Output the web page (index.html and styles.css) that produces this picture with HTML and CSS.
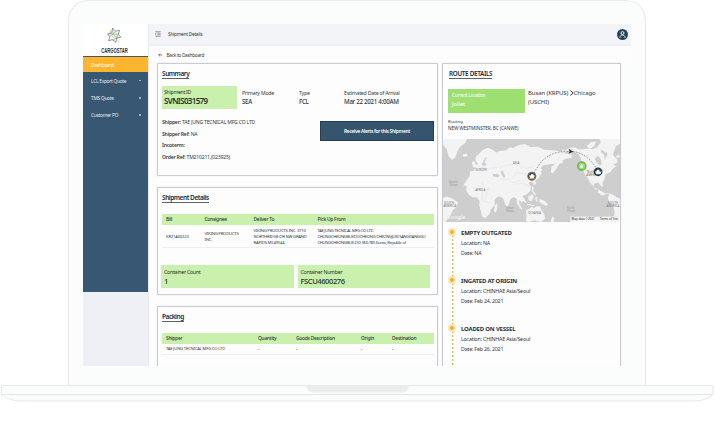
FILE: index.html
```html
<!DOCTYPE html>
<html lang="en">
<head>
<meta charset="utf-8">
<title>Shipment Details</title>
<link rel="stylesheet" href="styles.css">
</head>
<body>
<div class="laptop">
  <div class="lid">
    <div class="screen">
      <aside class="sidebar">
        <div class="logo">
          <svg class="logo-mark" viewBox="0 0 48 54" fill="none" stroke-width="2">
            <path stroke="#4d565c" d="M18 3l9 10 13-2-4 12 8 10-13 2-3 13-11-8-12 4 4-13-7-9 13-3z"/>
            <path stroke="#87939a" d="M18 3l2 20 16 0M27 13l-7 10-12 8M31 35l-11-12M17 42l14-7 5-12M4 22l16 1"/>
            <path stroke="#a4cf3e" d="M12 8l-3 11M38 40l-9 9M29 17l4 10-10 9-8-10"/>
          </svg>
          <div class="logo-name">CARGOSTAR</div>
        </div>
        <nav class="nav">
          <a class="nav-item active">Dashboard</a>
          <a class="nav-item">LCL Export Quote<i class="caret"></i></a>
          <a class="nav-item">TMS Quote<i class="caret"></i></a>
          <a class="nav-item">Customer PO<i class="caret"></i></a>
        </nav>
      </aside>
      <div class="page">
        <header class="topbar">
          <svg class="burger" viewBox="0 0 18 18" stroke="#59616b" stroke-width="1.8" fill="none"><path d="M1 2h16M7 6.5h10M7 11h10M1 16h16M5 5L1 9l4 4"/></svg>
          <span class="crumb">Shipment Details</span>
          <span class="avatar"><svg viewBox="0 0 30 30" fill="none" stroke="#fff" stroke-width="2.4"><circle cx="15" cy="11" r="4"/><path d="M8 24c0-10 14-10 14 0"/></svg></span>
        </header>
        <div class="back"><svg viewBox="0 0 14 12" fill="none" stroke="#444b55" stroke-width="2"><path d="M13 6H2M7 1L2 6l5 5"/></svg>Back to Dashboard</div>
        <main class="columns">
          <div class="left">
            <section class="card summary">
              <h2>Summary</h2>
              <div class="facts">
                <div class="fact tile"><label>Shipment ID</label><b>SVNIS031579</b></div>
                <div class="fact"><label>Primary Mode</label><b>SEA</b></div>
                <div class="fact"><label>Type</label><b>FCL</b></div>
                <div class="fact"><label>Estimated Date of Arrival</label><b class="eta">Mar 22 2021 4:00AM</b></div>
              </div>
              <div class="summary-body">
                <div class="refs">
                  <p><b>Shipper:</b> TAE JUNG TECNICAL MFG CO LTD</p>
                  <p><b>Shipper Ref:</b> NA</p>
                  <p><b>Incoterm:</b></p>
                  <p><b>Order Ref:</b> TM210211,(023925)</p>
                </div>
                <button class="alerts">Receive Alerts for this Shipment</button>
              </div>
            </section>
            <section class="card details">
              <h2>Shipment Details</h2>
              <div class="row head"><span>Bill</span><span>Consignee</span><span>Deliver To</span><span>Pick Up From</span></div>
              <div class="row body">
                <span>KR21A00223</span>
                <span>VIKING PRODUCTS<br>INC.</span>
                <span>VIKING PRODUCTS INC. 3710<br>NORTHRIDGE DR NW GRAND<br>RAPIDS MI 49544</span>
                <span class="pickup">TAE JUNG TECNICAL MFG CO LTD<br>CHUNGCHEONGBUKDOCHEONG CHEONGJUSI SANGDANGGU<br>CHUNGCHEONGBUK-DO 360-785 Korea, Republic of</span>
              </div>
              <div class="containers">
                <div class="tile"><label>Container Count</label><b>1</b></div>
                <div class="tile"><label>Container Number</label><b>FSCU4600276</b></div>
              </div>
            </section>
            <section class="card packing">
              <h2>Packing</h2>
              <div class="row head"><span>Shipper</span><span>Quantity</span><span>Goods Description</span><span>Origin</span><span>Destination</span></div>
              <div class="row body"><span>TAE JUNG TECNICAL MFG CO LTD</span><b>-</b><b>-</b><b>-</b><b>-</b></div>
            </section>
          </div>
          <section class="card route">
            <h2>ROUTE DETAILS</h2>
            <div class="leg">
              <div class="current"><label>Current Location</label><b>Joliet</b></div>
              <div class="ports">Busan (KRPUS) <svg viewBox="0 0 10 14" fill="none" stroke="#222c38" stroke-width="2.4"><path d="M1 1l7 6-7 6"/></svg>Chicago<br>(USCHI)</div>
            </div>
            <div class="routing"><label>Routing</label>NEW WESTMINSTER, BC (CANWE)</div>
            <svg class="map" viewBox="8 14 532 248" preserveAspectRatio="none">
              <rect x="8" y="14" width="532" height="248" fill="#cecece"/>
              <g fill="#f3f3f3">
                <path d="M8 14h72l-5 12-14 10-9 14-8 20-9 6-10-10-6-22-11-12z"/>
                <path d="M68 60l10-3 5 6-8 5-7-2z"/>
                <path d="M94 84l7-5 4 7 4 10-9 4-3-7z"/>
                <path d="M88 124l2-14 12-2 4-8-4-6 12-5-8-9 0-12 10-10 12-12 14-6 12 4 14 10 10-4 18-2 14-9 8 3 16-9 19-4 18 9 22-1 20 9 34 2 32 10 18 3-4 10-14 1-12 6 2 7-12 4-8 14-12 14-5-4 2-15 12-10-22 2-16 3-9 13 6 9-8 14-12 10 3 10-6 2-5-9-9 1-3 5 8 8-3 13-11 11-12 5 5 13-7 6-8-8 1 13 9 15-5 0-12-17-1-16-10-3-9 7-6 18-6 3-10-26-15-6-15-2 8 9-9 10-19 7-4-9-12-18-2-12-18 1-9-8-7 2-6-9-9-3-8 9z"/>
                <path d="M91 138l20-6 19 7 20 2 11 17 8 11 15 1-9 15-11 10-1 16-11 14-4 12-12 13-10-3-5-20-4-14 1-14-9-11-13 0-11-8-7-12 2-16z"/>
                <path d="M164 213l6-8 2 12-5 17-6-5z"/>
                <path d="M283 130l7-5 4-11 5 4-5 13-9 6zM297 111l3-12 7 7-5 5zM284 110l3-20 3 0-1 20z"/>
                <path d="M243 182l10 11 6 12-6-2-9-12zM264 186l13-7 4 7-7 15-9-5zM285 188l9 0-5 5 5 10-7-4zM260 208l23 3-2 3-19-3zM297 194l12 2 15 12-5 6-12-6-8-5zM275 157l5 0 0 13 8 10-4 3-8-13z"/>
                <path d="M257 228l18-11 9 3 6-6 10 2 3 9 9 12 3 15-13 10-20-5-17 5-8-3 2-14z"/>
                <path d="M337 245l6 7-3 10h-9z"/>
                <path d="M362 67l10-18 16-8 14-3 16 7 24-2 18 1 11-5 12-16 20-3-2 12-13 10-6 11 10 7 2 17 9-18 5-9 9 4 5 12 10 8 0 10-14 7 12 4-15 10-3 7-16 8-3 15-6 9 2 13-6-2-8-11-12 3-3 10 7 9 9-4-2 11 10 9 9-1 9-6 15 4 14 10 12 4v53h-21l2-15-4-15-13-15-4-12 5-10-14-3-17-10-15-7-12-15-10-19-3 0-7-15-7-14 2-16-4-10-7-11-14-9-15-1-14 6-9-4 11-7z"/>
                <path d="M440 36l14-14 14 0-5 13-14 8zM481 37l19 3 5 11-9 4-9-8zM478 14h62v15l-12 6-5 14-6 16-8 3-7-9-5-20-14-12z"/>
                <path d="M8 190l10-4 18 6 17 11-5 14-11 11-7 15-10 13-5 6H8z"/>
                <path d="M470 172l13-1 11 5-8 2zM528 65l11-5v9h-9z"/>
              </g>
              <g fill="#cecece"><path d="M157 119l13-1 9 5-7 5-14-3zM181 111l7-3 2 7 5 13-5 2-6-11zM464 72l10-8 9 12 2 13-6 5-9-9zM464 111l10-3 10 6-9 3-6-1zM124 92l10-22 6-3-7 16 6 8-8 4z"/></g>
              <g class="borders"><path d="M103 167l46 0M126 142v60M110 153l20 13 18-6M108 105l18-6 22 3 24-4M176 101l23-9 28-2 28 12 28-7M181 133l22 1 15 10 23-5M214 134l13-19 36 4M224 149l26-2 18 10M424 108h78M394 42v29M438 133l25 13M502 214l28-4M141 167l-8 33 21 6"/></g>
              <g class="map-label">
                <text x="228" y="88">ASIA</text><text x="123" y="111">EUROPE</text><text x="120" y="168">AFRICA</text><text x="283" y="237">OCEANIA</text>
                <text x="453" y="115">North</text><text x="458" y="125">AMERICA</text>
                <text x="26" y="208">SOUTH</text><text x="28" y="218">AMERICA</text><text x="519" y="208">SOUTH</text><text x="519" y="218">AMERICA</text>
                <g class="ocean"><text x="40" y="146">Atlantic</text><text x="40" y="154">Ocean</text><text x="209" y="223">Indian</text><text x="209" y="233">Ocean</text><text x="393" y="222">Pacific</text><text x="393" y="232">Ocean</text></g>
              </g>
              <path d="M276 124C300 82 320 50 388 51C428 50 458 79 474 112" fill="none" stroke="#777" stroke-width="2.2" stroke-dasharray="5 4"/>
              <path d="M385 43l15 9-15 5 4-6z" fill="#222d36"/>
              <circle cx="275" cy="125" r="12" fill="#514d50" stroke="#76675b" stroke-width="3"/><path d="M267 123h4l2-4h7v4h4l-3 8h-11z" fill="#fff"/><path d="M267 132h16" stroke="#f5ae35" stroke-width="3"/>
              <circle cx="425" cy="95" r="12" fill="#b5e794" stroke="#65bc43" stroke-width="5"/><path d="M417 94l8-7 8 7M420 93v9h10v-9" fill="#fff" stroke="#75c753" stroke-width="2"/>
              <circle cx="474" cy="112" r="13" fill="#213b4d"/><path d="M465 111h4l2-5h7v5h6l-3 8h-12z" fill="#fff"/>
              <text class="google" x="18" y="254">Google</text>
              <rect x="391" y="246" width="149" height="16" fill="#f5f5f5"/><text class="credits" x="394" y="257">Map data ©2021</text><text class="credits" x="479" y="257">Terms of Use</text>
            </svg>
            <ol class="timeline">
              <li><h3>EMPTY OUTGATED</h3><p>Location: NA</p><p>Date: NA</p></li>
              <li><h3>INGATED AT ORIGIN</h3><p>Location: CHINHAE Asia/Seoul</p><p>Date: Feb 24, 2021</p></li>
              <li><h3>LOADED ON VESSEL</h3><p>Location: CHINHAE Asia/Seoul</p><p>Date: Feb 26, 2021</p></li>
            </ol>
          </section>
        </main>
      </div>
    </div>
  </div>
  <svg class="base" viewBox="0 0 715 20">
    <path d="M1.5 1.5h711.500v9c-4 4-10 6-17 6.500H18c-7-1-13-3-16.500-6.500z" fill="#fbfcfc" stroke="#e7e9e9"/>
    <path d="M2 10.500h711" stroke="#e5e7e7"/>
    <path d="M306 1.500h103c-1 5-3 7-8 7h-87c-5 0-7-3-8-7z" fill="#ebecec"/>
  </svg>
</div>
</body>
</html>
```
FILE: styles.css
```css
*, *::before { box-sizing: border-box; }
body { margin: 0; background: #fff; overflow: hidden; font-family: "Noto Sans", "Open Sans", sans-serif; color: #303842; letter-spacing: -.15px; }
h2, h3, p, ol { margin: 0; padding: 0; }
svg { display: block; }
label { display: block; }

.laptop { width: 715px; height: 430px; }
.lid { width: 578px; height: 385px; margin-left: 68px; padding: 23px 14px 0; background: #fbfcfc; border: 1px solid #e9ebeb; border-bottom: 0; border-radius: 20px 20px 0 0; }
.base { width: 715px; height: 20px; margin-top: -1px; }
.screen { display: flex; width: 548px; height: 342px; overflow: hidden; background: #fdfdfd; }

.sidebar { width: 66px; flex: none; background: #eff0f5; border-right: 1px solid #e9eaee; }
.logo { height: 33px; background: #fff; border-bottom: 1px solid #465561; display: flex; flex-direction: column; align-items: center; padding: 3px 3px 0 0; }
.logo-mark { width: 15px; height: 17px; }
.logo-name { font: 700 8px/10px "Liberation Sans", sans-serif; transform: scaleX(.52); margin-top: 2px; letter-spacing: 0; color: #2b2f34; }
.nav { height: 235px; background: #375772; }
.nav-item { display: flex; align-items: center; justify-content: space-between; height: 17.2px; padding: 0 7px 0 8px; color: #e5edf3; font-size: 4.800px; letter-spacing: -.25px; }
.nav-item.active { height: 15px; background: #fcb52e; color: #fff; }
.caret { width: 2.500px; height: 1.500px; background: #9eb0be; }

.page { flex: 1; min-width: 0; }
.topbar { display: flex; align-items: center; height: 22px; padding: 0 3px 0 6px; background: #f3f4f8; border-bottom: 2px solid #eeeff4; }
.burger { width: 6px; height: 6px; }
.crumb { margin-left: 7px; font-size: 4.900px; letter-spacing: -.3px; }
.avatar { width: 11px; height: 11px; margin-left: auto; border-radius: 50%; background: #29455c; }
.back { display: flex; align-items: center; height: 17px; padding: 1px 0 0 9px; font-size: 4.800px; letter-spacing: -.3px; }
.back svg { width: 4.500px; height: 4px; margin-right: 4px; }

.columns { display: flex; gap: 4px; padding-left: 8px; height: 303px; border-right: 8px solid #fbfcfc; }
.left { width: 281px; flex: none; }
.card { background: #fdfdfd; border: 1px solid #c9ccd2; box-shadow: 0 0 1px #bbb; border-radius: 1px; }
.summary { height: 113px; }
.details { height: 108px; margin-top: 11px; }
.packing { height: 75px; margin-top: 11px; }
h2 { width: max-content; margin: 5px 0 0 4px; font-size: 6.500px; line-height: 9px; font-weight: 600; letter-spacing: -.45px; color: #202b38; border-bottom: 1px solid #59626c; }

.facts { display: grid; grid-template-columns: 80px 57px 45px 1fr; margin: 7px 0 0 4px; }
.fact { height: 23px; font-size: 5.200px; line-height: 7px; padding-top: 4px; letter-spacing: -.2px; }
.fact b { display: block; font-size: 6.200px; line-height: 9px; font-weight: 500; letter-spacing: -.3px; }
.tile { background: #c9f0ad; color: #26312e; }
.fact.tile { width: 75px; padding: 2px 0 0 2px; line-height: 8px; letter-spacing: -.3px; }
.fact.tile b { font-size: 8px; line-height: 10px; font-weight: 600; letter-spacing: -.65px; }
.summary-body { display: flex; margin: 6px 3px 0 4px; }
.refs { flex: 1; padding-top: 4px; font-size: 5.100px; letter-spacing: -.2px; white-space: nowrap; }
.refs p { line-height: 7px; height: 11.600px; }
.refs b { font-weight: 600; }
.alerts { width: 114px; height: 20px; margin-top: 6px; padding: 0; background: #35546d; border: 1px solid #263e52; color: #fff; font: 600 4.900px "Noto Sans", sans-serif; letter-spacing: -.32px; }

.row { display: grid; margin: 0 3px 0 4px; font-size: 4.900px; }
.details .row { grid-template-columns: 38.500px 49px 64px 1fr; padding-left: 4px; }
.packing .row { grid-template-columns: 92px 38px 65px 31px 1fr; padding-left: 4px; }
.row.head { margin-top: 11px; height: 11px; line-height: 11px; background: #c9f0ad; font-weight: 500; letter-spacing: -.25px; color: #2b3530; }
.row.body { height: 23px; padding-top: 2px; font-size: 4.200px; line-height: 6.200px; align-items: center; border-bottom: 1px solid #eceef0; white-space: nowrap; letter-spacing: -.2px; }
.row.body .pickup { letter-spacing: -.32px; }
.packing .row.body { height: 11px; padding-top: 0; }
.containers { display: flex; gap: 4px; margin: 17px 7px 0 3px; }
.containers .tile { width: 133px; height: 23px; padding: 2.500px 3px 0; font-size: 5.300px; line-height: 8px; letter-spacing: -.3px; }
.containers b { display: block; font-size: 7.600px; line-height: 10px; font-weight: 500; letter-spacing: -.45px; }

.route { width: 179px; height: 330px; }
.route h2 { margin-left: 6px; font-size: 6.300px; letter-spacing: -.3px; }
.leg { display: flex; margin: 10px 0 0 5px; }
.current { width: 77px; height: 24px; padding: 3px 0 0 4px; background: #9ddf70; color: #fff; font-size: 4.800px; line-height: 7px; letter-spacing: -.28px; }
.current b { display: block; font-size: 5.500px; line-height: 11px; font-weight: 500; letter-spacing: 0; }
.ports { margin-left: 3px; font-size: 6px; line-height: 9px; letter-spacing: -.1px; white-space: nowrap; }
.ports svg { display: inline-block; width: 4px; height: 6px; vertical-align: -1px; }
.routing { height: 26px; padding: 5px 0 0 5px; font-size: 4.700px; line-height: 7px; letter-spacing: -.1px; }
.routing label { font-size: 4.200px; }
.map { width: 177px; height: 83px; letter-spacing: 0; }
.borders { fill: none; stroke: #dedede; stroke-width: 1.500; }
.map-label { font-size: 9px; fill: #777; text-anchor: middle; }
.ocean { font-size: 8px; fill: #999; }
.google { font: 700 17px "Liberation Sans", sans-serif; fill: #eee; }
.credits { font-size: 9px; fill: #222; }

.timeline { list-style: none; padding: 6px 0 0 18px; font-size: 5.300px; letter-spacing: -.2px; background: repeating-linear-gradient(#efc567 0 2px, transparent 2px 4px, #aeca59 4px 6px, transparent 6px 8px) 8.500px 9px / 1.500px 100% no-repeat; }
.timeline li { position: relative; height: 48.200px; }
.timeline li::before { content: ""; position: absolute; left: -13px; top: 0; width: 8px; height: 8px; border: 2px solid #f3e8ae; border-radius: 50%; background: #f5ae2b; }
.timeline h3 { font-size: 6px; line-height: 10px; font-weight: 700; letter-spacing: -.2px; color: #26313c; }
.timeline p { line-height: 10px; }
```
